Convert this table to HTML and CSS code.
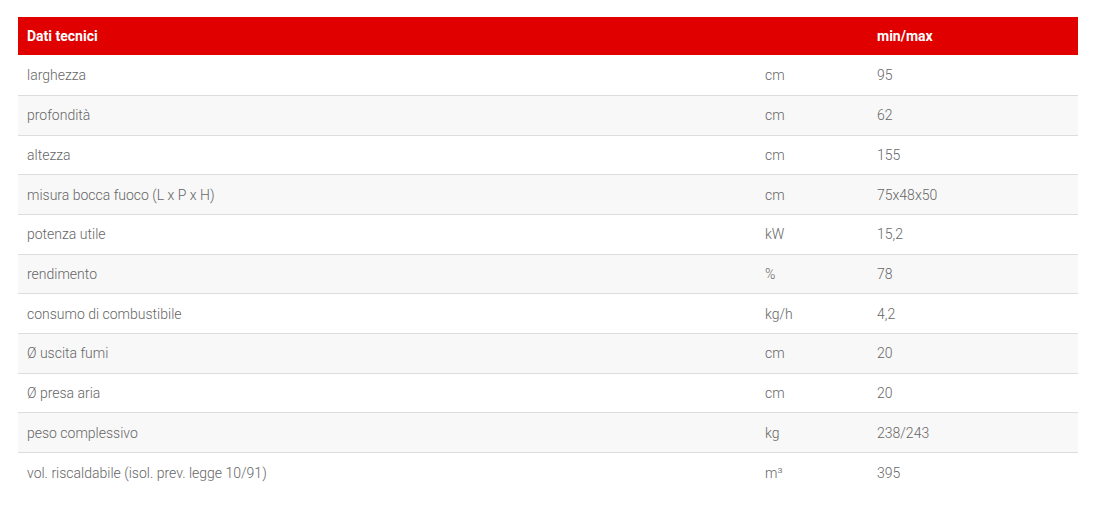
FILE: index.html
```html
<!DOCTYPE html>
<html lang="it">
<head>
<meta charset="utf-8">
<link rel="stylesheet" href="styles.css">
</head>
<body>
<table class="specs">
  <colgroup>
    <col class="c-name"><col class="c-unit"><col class="c-val">
  </colgroup>
  <thead>
    <tr><th>Dati tecnici</th><th></th><th>min/max</th></tr>
  </thead>
  <tbody>
    <tr><td>larghezza</td><td>cm</td><td>95</td></tr>
    <tr><td>profondità</td><td>cm</td><td>62</td></tr>
    <tr><td>altezza</td><td>cm</td><td>155</td></tr>
    <tr><td>misura bocca fuoco (L x P x H)</td><td>cm</td><td>75x48x50</td></tr>
    <tr><td>potenza utile</td><td>kW</td><td>15,2</td></tr>
    <tr><td>rendimento</td><td>%</td><td>78</td></tr>
    <tr><td>consumo di combustibile</td><td>kg/h</td><td>4,2</td></tr>
    <tr><td>Ø uscita fumi</td><td>cm</td><td>20</td></tr>
    <tr><td>Ø presa aria</td><td>cm</td><td>20</td></tr>
    <tr><td>peso complessivo</td><td>kg</td><td>238/243</td></tr>
    <tr><td>vol. riscaldabile (isol. prev. legge 10/91)</td><td>m³</td><td>395</td></tr>
  </tbody>
</table>
</body>
</html>
```
FILE: styles.css
```css
html, body {
  margin: 0;
  background: #fff;
}
body {
  padding: 17px 20px 0 18px;
  font-family: Roboto, "Liberation Sans", sans-serif;
}
.specs {
  width: 1060px;
  border-collapse: collapse;
  table-layout: fixed;
}
.c-name { width: 738px; }
.c-unit { width: 112px; }
.c-val { width: 210px; }
.specs th {
  background: #e00000;
  color: #fff;
  font-weight: 700;
  font-size: 14px;
  text-align: left;
  height: 38px;
  padding: 0 9px;
  box-sizing: border-box;
}
.specs td {
  font-weight: 300;
  font-size: 14px;
  color: #666;
  height: 39.67px;
  padding: 0 9px;
  box-sizing: border-box;
  border-bottom: 1px solid #ddd;
}
.specs tbody tr:first-child td {
  height: 40.67px;
}
.specs tbody tr:nth-child(even) td {
  background: #f8f8f8;
}
.specs tbody tr:last-child td {
  border-bottom: none;
}
```
